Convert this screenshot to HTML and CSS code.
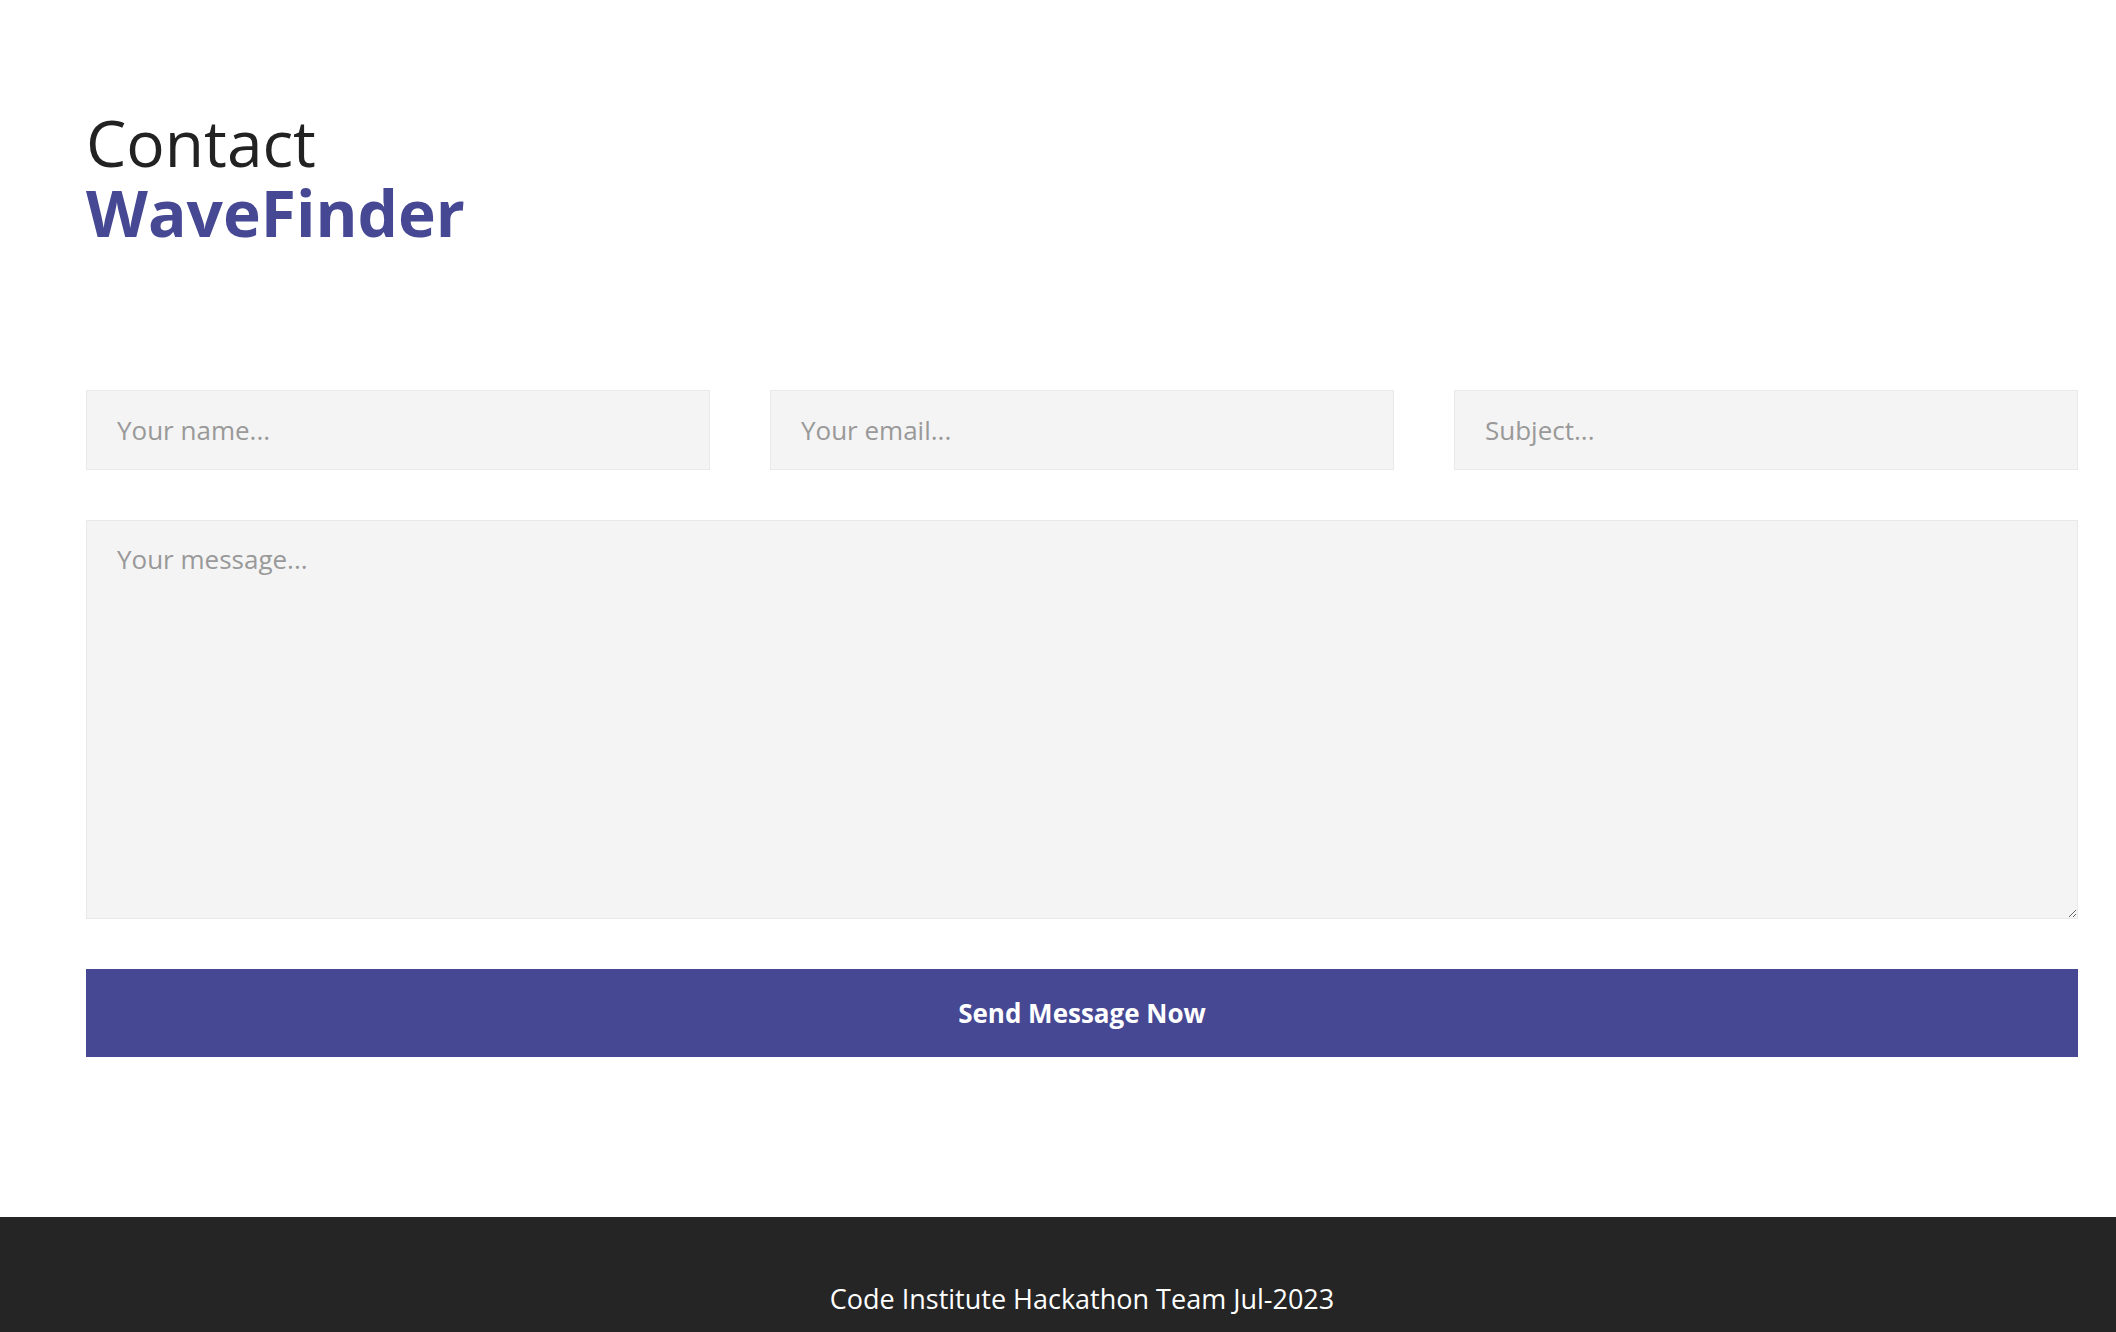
FILE: index.html
```html
<!DOCTYPE html>
<html lang="en">
<head>
<meta charset="utf-8">
<title>Contact WaveFinder</title>
<link rel="stylesheet" href="styles.css">
</head>
<body>
<main class="contact">
  <h1 class="title"><span class="title-light">Contact</span><span class="title-brand">WaveFinder</span></h1>
  <form class="form">
    <div class="row">
      <input class="field" type="text" placeholder="Your name...">
      <input class="field" type="email" placeholder="Your email...">
      <input class="field" type="text" placeholder="Subject...">
    </div>
    <textarea class="field message" placeholder="Your message..."></textarea>
    <button class="send" type="button">Send Message Now</button>
  </form>
</main>
<footer class="footer">
  <p class="footer-text">Code Institute Hackathon Team Jul-2023</p>
</footer>
</body>
</html>
```
FILE: styles.css
```css
html, body {
  margin: 0;
  padding: 0;
  background: #ffffff;
}
body {
  font-family: "Open Sans", "Liberation Sans", sans-serif;
  color: #222222;
}
.contact {
  padding: 108px 38px 0 86px;
}
.title {
  margin: 0;
  font-size: 64px;
  line-height: 70px;
  font-weight: 400;
}
.title-light {
  display: block;
  color: #222222;
}
.title-brand {
  display: block;
  font-weight: 700;
  color: #464894;
}
.form {
  margin-top: 142px;
  display: flex;
  flex-direction: column;
}
.row {
  display: grid;
  grid-template-columns: repeat(3, 1fr);
  column-gap: 60px;
}
.field {
  box-sizing: border-box;
  height: 80px;
  margin: 0;
  padding: 0 30px;
  background: #f4f4f4;
  border: 1px solid #e9e9e9;
  border-radius: 0;
  font-family: "Open Sans", "Liberation Sans", sans-serif;
  font-size: 26px;
  color: #333333;
  outline: none;
}
.field::placeholder {
  color: #999999;
  opacity: 1;
}
.message {
  margin-top: 50px;
  height: 399px;
  padding: 21px 30px 20px;
  line-height: 1.362;
  resize: vertical;
}
.send {
  margin-top: 50px;
  height: 88px;
  border: none;
  background: #464894;
  color: #ffffff;
  font-family: "Open Sans", "Liberation Sans", sans-serif;
  font-size: 26px;
  font-weight: 700;
  cursor: pointer;
}
.footer {
  margin-top: 160px;
  background: #252525;
  padding: 64px 38px 64px 86px;
}
.footer-text {
  margin: 0;
  text-align: center;
  color: #ffffff;
  font-size: 27px;
  line-height: 36px;
  font-weight: 400;
}
```
